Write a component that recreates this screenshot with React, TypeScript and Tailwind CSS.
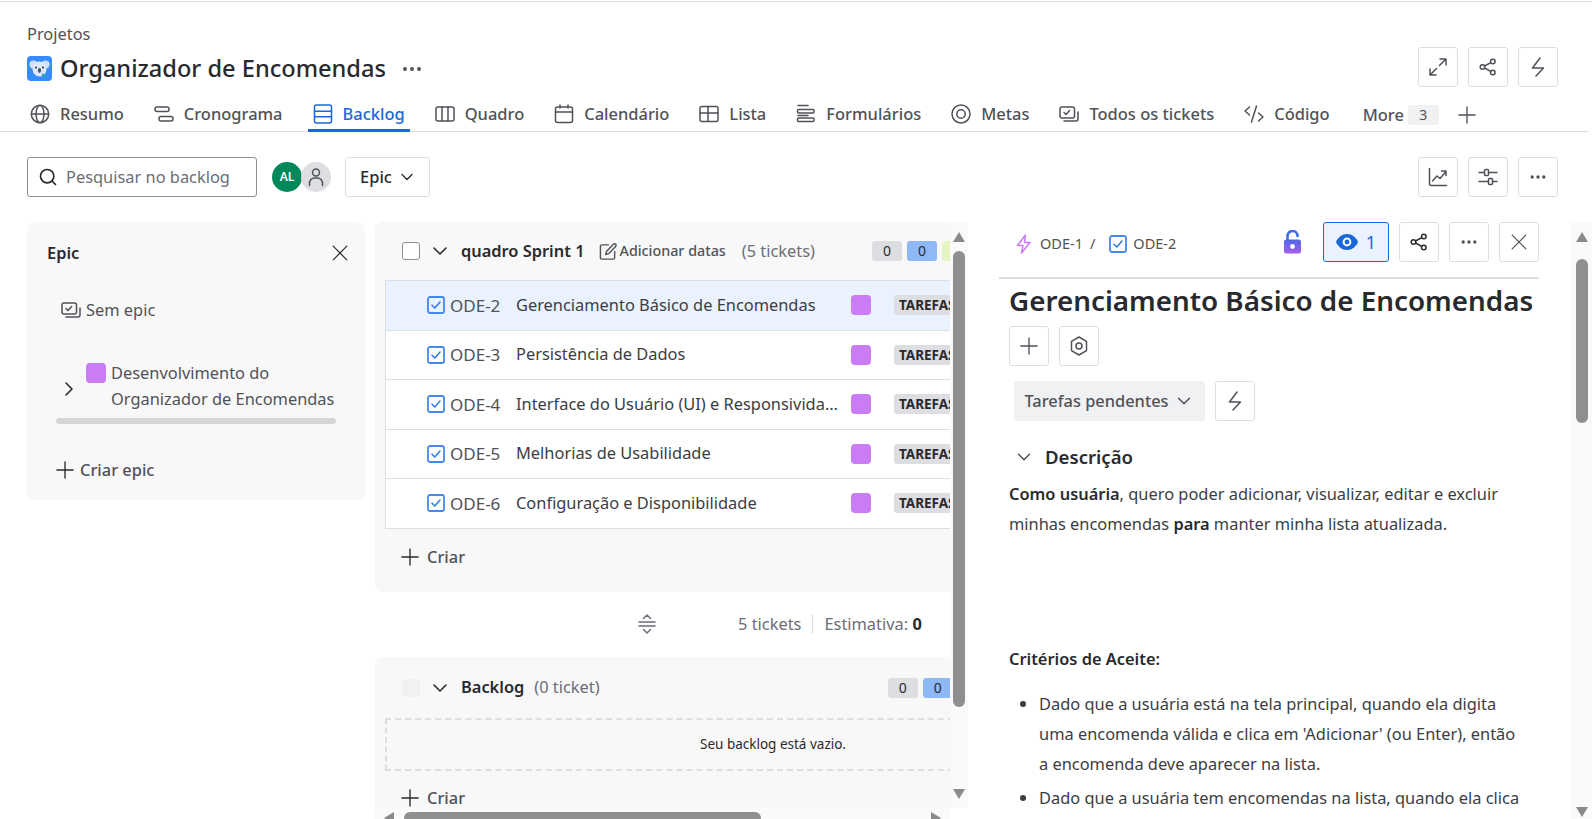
import type { ReactNode } from "react";
import { ChevronDown, ChevronRight, Ellipsis, Search } from "lucide-react";

// ===== SVG Icons =====
type IconProps = { className?: string };

const Svg = ({ className = "w-5 h-5", children }: IconProps & { children: ReactNode }) => (
  <svg
    className={`shrink-0 ${className}`}
    viewBox="0 0 20 20"
    fill="none"
    stroke="currentColor"
    strokeWidth="1.5"
    strokeLinecap="round"
    strokeLinejoin="round"
  >
    {children}
  </svg>
);

const IconPlus = (p: IconProps) => (
  <Svg {...p}>
    <path d="M10 1v18M1 10h18" />
  </Svg>
);
const IconClose = (p: IconProps) => (
  <Svg {...p}>
    <path d="M1.5 1.5l17 17M18.5 1.5l-17 17" />
  </Svg>
);
const IconBolt = (p: IconProps) => (
  <Svg {...p}>
    <path d="M12 1L4.5 11h11L8 19" />
  </Svg>
);
const IconEpic = (p: IconProps) => (
  <Svg {...p}>
    <path d="M11.5 1L3.5 11.5h5.5L7.5 19l8.5-10.5h-5.5z" />
  </Svg>
);
const IconExpand = (p: IconProps) => (
  <Svg {...p}>
    <path d="M12 2h6v6M18 2l-6.5 6.5M8 18H2v-6M2 18l6.5-6.5" />
  </Svg>
);
const IconGlobe = (p: IconProps) => (
  <Svg {...p}>
    <circle cx="10" cy="10" r="8.7" />
    <ellipse cx="10" cy="10" rx="4" ry="8.7" />
    <path d="M1.5 10h17" />
  </Svg>
);
const IconTimeline = (p: IconProps) => (
  <Svg {...p}>
    <rect x="1" y="3" width="14" height="4.6" rx="2" />
    <rect x="5" y="12.4" width="14" height="4.6" rx="2" />
  </Svg>
);
const IconBacklog = (p: IconProps) => (
  <Svg {...p}>
    <rect x="1.5" y="1" width="17" height="18" rx="2" />
    <path d="M1.5 7.2h17M1.5 12.8h17" />
  </Svg>
);
const IconBoard = (p: IconProps) => (
  <Svg {...p}>
    <rect x="1" y="3" width="18" height="14" rx="2" />
    <path d="M7 3v14M13 3v14" />
  </Svg>
);
const IconCalendar = (p: IconProps) => (
  <Svg {...p}>
    <rect x="1.5" y="3" width="17" height="15.5" rx="2" />
    <path d="M1.5 8h17M6 1v3M14 1v3" />
  </Svg>
);
const IconList = (p: IconProps) => (
  <Svg {...p}>
    <rect x="1" y="2.5" width="18" height="15" rx="2" />
    <path d="M1 9h18M9 2.5v15" />
  </Svg>
);
const IconForm = (p: IconProps) => (
  <Svg {...p}>
    <path d="M2 1.5h10" />
    <rect x="1.5" y="5.5" width="16.5" height="3.6" rx="1" />
    <rect x="1.5" y="14" width="16.5" height="3.6" rx="1" />
    <path d="M2 11.5h10" />
  </Svg>
);
const IconGoal = (p: IconProps) => (
  <Svg {...p}>
    <circle cx="10" cy="10" r="9" />
    <circle cx="10" cy="10" r="4.2" />
  </Svg>
);
const IconTickets = (p: IconProps) => (
  <Svg {...p}>
    <rect x="1" y="3" width="14.5" height="11" rx="2" />
    <path d="M5 8.5l2 2 3.6-4" />
    <path d="M19 8v7a2 2 0 0 1-2 2H5" />
  </Svg>
);
const IconCode = (p: IconProps) => (
  <Svg {...p}>
    <path d="M5.5 3L1 7l4.5 4M14.5 9L19 13l-4.5 4M12.5 2L7.5 18" />
  </Svg>
);
const IconShare = (p: IconProps) => (
  <Svg {...p}>
    <circle cx="4.5" cy="10" r="2.3" />
    <circle cx="14.8" cy="4.5" r="2.3" />
    <circle cx="14.8" cy="15.5" r="2.3" />
    <path d="M6.6 9l6.1-3.4M6.6 11l6.1 3.4" />
  </Svg>
);
const IconChart = (p: IconProps) => (
  <Svg {...p}>
    <path d="M1.5 1.5v15a2 2 0 0 0 2 2h15" />
    <path d="M4.5 14l4.5-5 3 2.5L18 4.5M13.5 4H18v4.5" />
  </Svg>
);
const IconSliders = (p: IconProps) => (
  <Svg {...p}>
    <path d="M1 5.5h5M11 5.5h8M1 14.5h9M15 14.5h4" />
    <rect x="6.5" y="2.5" width="4" height="6" rx="1" />
    <rect x="10.5" y="11.5" width="4" height="6" rx="1" />
  </Svg>
);
const IconEdit = (p: IconProps) => (
  <Svg {...p}>
    <path d="M10 3H3a1.5 1.5 0 0 0-1.5 1.5v12A1.5 1.5 0 0 0 3 18h12a1.5 1.5 0 0 0 1.5-1.5V10" />
    <path d="M7 13.2l.8-3.2 7.4-7.6a1.6 1.6 0 0 1 2.3 2.3l-7.4 7.6z" />
  </Svg>
);
const IconCollapse = (p: IconProps) => (
  <Svg {...p}>
    <path d="M6.5 4.5L10 1l3.5 3.5M6.5 15.5L10 19l3.5-3.5M2 8h16M2 12h16" />
  </Svg>
);
const IconHex = (p: IconProps) => (
  <Svg {...p}>
    <path d="M10 1l7.5 4.4v9.2L10 19l-7.5-4.4V5.4z" />
    <circle cx="10" cy="10" r="3" />
  </Svg>
);
const IconPerson = (p: IconProps) => (
  <Svg {...p}>
    <circle cx="10" cy="5.5" r="3.5" />
    <path d="M3.5 18.5v-2.5a5 5 0 0 1 5-5h3a5 5 0 0 1 5 5v2.5" />
  </Svg>
);
const IconLock = ({ className = "w-5 h-6" }: IconProps) => (
  <svg className={`shrink-0 ${className}`} viewBox="0 0 18 24">
    <defs>
      <linearGradient id="lockFill" x1="0" y1="0" x2="0" y2="1">
        <stop offset="0" stopColor="#4f68e6" />
        <stop offset="1" stopColor="#a35fe6" />
      </linearGradient>
    </defs>
    <path d="M4 10V6a5 5 0 0 1 10 0" fill="none" stroke="#3f6fe6" strokeWidth="2.6" strokeLinecap="round" />
    <rect x="0.5" y="9.5" width="17" height="14" rx="2.5" fill="url(#lockFill)" />
    <circle cx="9" cy="16.5" r="2.4" fill="#fff" />
  </svg>
);
const IconEye = ({ className = "w-[22px] h-[16px]" }: IconProps) => (
  <svg className={`shrink-0 ${className}`} viewBox="0 0 22 16">
    <path d="M11 0C6 0 2 3.3 0 8c2 4.7 6 8 11 8s9-3.3 11-8c-2-4.7-6-8-11-8z" fill="#1868db" />
    <circle cx="11" cy="8" r="4.4" fill="#fff" />
    <circle cx="11" cy="8" r="2.4" fill="#1868db" />
  </svg>
);
const IconCheckBox = ({ className = "w-[18px] h-[18px]" }: IconProps) => (
  <svg className={`shrink-0 ${className}`} viewBox="0 0 18 18" fill="none">
    <rect x="1" y="1" width="16" height="16" rx="2" stroke="#4688ec" strokeWidth="1.8" />
    <path d="M5 9.2l2.8 2.8L13 6" stroke="#357de8" strokeWidth="1.6" strokeLinecap="round" strokeLinejoin="round" />
  </svg>
);
const IconKoala = () => (
  <svg className="w-[25px] h-[25px] shrink-0" viewBox="0 0 25 25">
    <rect width="25" height="25" rx="4" fill="#388bff" />
    <circle cx="6.5" cy="8.5" r="4" fill="#cfe1fd" />
    <circle cx="18.5" cy="8.5" r="4" fill="#cfe1fd" />
    <ellipse cx="12.5" cy="13" rx="7" ry="7.5" fill="#dfe9f7" />
    <ellipse cx="12.5" cy="14.5" rx="1.6" ry="2.4" fill="#44546f" />
    <circle cx="9" cy="11.5" r="1" fill="#172b4d" />
    <circle cx="16" cy="11.5" r="1" fill="#172b4d" />
    <path d="M15 18l4 3" stroke="#1fa5a0" strokeWidth="2" />
  </svg>
);

// ===== Data =====
const tabs = [
  { label: "Resumo", icon: IconGlobe },
  { label: "Cronograma", icon: IconTimeline },
  { label: "Backlog", icon: IconBacklog, active: true },
  { label: "Quadro", icon: IconBoard },
  { label: "Calendário", icon: IconCalendar },
  { label: "Lista", icon: IconList },
  { label: "Formulários", icon: IconForm },
  { label: "Metas", icon: IconGoal },
  { label: "Todos os tickets", icon: IconTickets },
  { label: "Código", icon: IconCode },
];

const tickets = [
  { key: "ODE-2", title: "Gerenciamento Básico de Encomendas", selected: true },
  { key: "ODE-3", title: "Persistência de Dados" },
  { key: "ODE-4", title: "Interface do Usuário (UI) e Responsividade" },
  { key: "ODE-5", title: "Melhorias de Usabilidade" },
  { key: "ODE-6", title: "Configuração e Disponibilidade" },
];

// ===== Components =====
function IconButton({ children }: { children: ReactNode }) {
  return (
    <button className="w-10 h-10 flex items-center justify-center rounded-[3px] border border-[#dddee1] bg-white text-[#505258] shrink-0">
      {children}
    </button>
  );
}

function Swatch() {
  return <span className="block w-5 h-5 rounded-[4px] bg-[#c97cf4] shrink-0" />;
}

function CountBadges({ third = false }: { third?: boolean }) {
  return (
    <div className="flex gap-[5px] text-sm text-[#292a2e]">
      <span className="w-[30px] h-5 rounded-[3px] bg-[#dddee1] flex items-center justify-center">0</span>
      <span className="w-[30px] h-5 rounded-[3px] bg-[#8fb8f6] flex items-center justify-center">0</span>
      {third && <span className="w-[30px] h-5 rounded-[3px] bg-[#e4f5c0] flex items-center justify-center">0</span>}
    </div>
  );
}

function CreateRow() {
  return (
    <div className="flex items-center gap-2 text-[#505258] font-medium">
      <IconPlus className="w-[18px] h-[18px] text-[#292a2e]" />
      Criar
    </div>
  );
}

function TicketRow({ ticket }: { ticket: (typeof tickets)[number] }) {
  return (
    <div
      className={`h-[49.5px] flex items-center border-b border-[#dddee1] pl-[41px] ${
        ticket.selected ? "bg-[#e9f2fe]" : "bg-white"
      }`}
    >
      <IconCheckBox />
      <span className="ml-[5px] w-[66px] text-[17px] text-[#505258]">{ticket.key}</span>
      <span className="w-[322px] truncate text-[#3b3d42]">{ticket.title}</span>
      <span className="ml-[13px]">
        <Swatch />
      </span>
      <span className="ml-[23px] h-5 px-[5px] rounded-[3px] bg-[#dddee1] text-[13.5px] font-bold text-[#292a2e] flex items-center">
        TAREFAS PENDENTES
      </span>
    </div>
  );
}

function VerticalScrollbar({ thumb, bottom, className = "" }: { thumb: string; bottom: string; className?: string }) {
  return (
    <div className={`flex flex-col items-center shrink-0 bg-[#fafafa] ${className}`}>
      <span className="mt-[10px] w-0 h-0 border-x-[6px] border-x-transparent border-b-[10px] border-b-[#8a8a8a]" />
      <span className={`w-[12px] rounded-[6px] bg-[#8f8f8f] ${thumb}`} />
      <span className={`mt-auto w-0 h-0 border-x-[6px] border-x-transparent border-t-[10px] border-t-[#8a8a8a] ${bottom}`} />
    </div>
  );
}

function EpicPanel() {
  return (
    <aside className="w-[338px] h-[278px] rounded-lg bg-[#f8f8f8] shrink-0 px-5 pt-5 text-[#505258]">
      <div className="flex items-center justify-between h-[22px]">
        <span className="font-semibold text-[#292a2e]">Epic</span>
        <IconClose className="w-[16px] h-[16px] text-[#292a2e] mr-[-3px]" />
      </div>
      <div className="mt-[34px] ml-[14px] flex items-center gap-[5px] h-6">
        <IconTickets className="w-5 h-5" />
        Sem epic
      </div>
      <div className="mt-[38px] ml-[14px] flex items-center">
        <ChevronRight className="w-6 h-6 text-[#292a2e] shrink-0 -ml-[4.5px] mt-[6px]" strokeWidth={1.6} />
        <div className="ml-[5.5px] leading-[26px]">
          <div className="flex items-center gap-[5px]">
            <Swatch />
            Desenvolvimento do
          </div>
          <div className="ml-[25px] whitespace-nowrap">Organizador de Encomendas</div>
        </div>
      </div>
      <div className="mt-[6px] ml-[9px] w-[280px] h-[6px] rounded-[3px] bg-[#d6d6d6]" />
      <div className="mt-[34px] ml-[9px] flex items-center gap-[6px] font-medium">
        <IconPlus className="w-[18px] h-[18px] text-[#292a2e]" />
        Criar epic
      </div>
    </aside>
  );
}

function SprintColumn() {
  return (
    <div className="w-[575px] ml-[10px] flex flex-col shrink-0">
      <div className="flex-1 overflow-hidden">
        <div className="w-[800px]">
          <section className="h-[370px] rounded-lg bg-[#f8f8f8] pl-[10px]">
            <div className="h-[58px] flex items-center pl-[17px]">
              <span className="w-[18px] h-[18px] rounded-[3px] border border-[#8c8f97] bg-white" />
              <ChevronDown className="ml-[8px] w-6 h-6 text-[#292a2e]" strokeWidth={1.6} />
              <span className="ml-[9px] font-semibold text-[#292a2e]">quadro Sprint 1</span>
              <IconEdit className="ml-[14px] w-[19px] h-[19px] text-[#505258]" />
              <span className="ml-[2px] text-[14.3px] font-medium text-[#505258]">Adicionar datas</span>
              <span className="ml-[16px] text-[#6b6e76]">(5 tickets)</span>
              <span className="ml-[57px]">
                <CountBadges third />
              </span>
            </div>
            <div className="border-t border-l border-[#dddee1]">
              {tickets.map((t) => (
                <TicketRow key={t.key} ticket={t} />
              ))}
            </div>
            <div className="mt-4 pl-[16px]">
              <CreateRow />
            </div>
          </section>
          <div className="h-[64px] flex items-center text-[#6b6e76]">
            <IconCollapse className="ml-[262px] w-5 h-5 text-[#6b6e76]" />
            <span className="ml-[81px]">5 tickets</span>
            <span className="mx-[11px] w-px h-5 bg-[#dddee1]" />
            <span>
              Estimativa: <b className="text-[#292a2e]">0</b>
            </span>
          </div>
          <section className="mt-px h-[200px] rounded-lg bg-[#f8f8f8] pl-[10px]">
            <div className="h-[61px] flex items-center pl-[17px]">
              <span className="w-[18px] h-[18px] rounded-[3px] bg-[#f0f1f2]" />
              <ChevronDown className="ml-[8px] w-6 h-6 text-[#292a2e]" strokeWidth={1.6} />
              <span className="ml-[9px] font-semibold text-[#292a2e]">Backlog</span>
              <span className="ml-[10px] text-[#6b6e76]">(0 ticket)</span>
              <span className="ml-[288px]">
                <CountBadges />
              </span>
            </div>
            <div className="h-[53px] border-2 border-dashed border-[#dddee1] flex items-center pl-[313px] text-[13.5px] text-[#292a2e]">
              Seu backlog está vazio.
            </div>
            <div className="mt-[15px] pl-[16px]">
              <CreateRow />
            </div>
          </section>
        </div>
      </div>
      <div className="h-[11px] bg-[#fafafa] flex items-start pt-[4px] shrink-0 overflow-hidden">
        <span className="ml-[9px] w-0 h-0 border-y-[6px] border-y-transparent border-r-[10px] border-r-[#8a8a8a]" />
        <span className="ml-[10px] w-[357px] h-[12px] rounded-[6px] bg-[#8f8f8f]" />
        <span className="ml-auto mr-[9px] w-0 h-0 border-y-[6px] border-y-transparent border-l-[10px] border-l-[#8a8a8a]" />
      </div>
    </div>
  );
}

function DetailPanel() {
  return (
    <div className="w-[540px] ml-[31px] shrink-0 text-[#292a2e] overflow-hidden">
      <div className="h-[57px] border-b-2 border-[#dddee1] flex items-start">
        <div className="h-[44px] flex items-center pl-[15px] text-[14.5px] text-[#505258]">
          <IconEpic className="w-5 h-[22px] text-[#c97cf4]" />
          <span className="ml-[6px]">ODE-1</span>
          <span className="ml-[7px]">/</span>
          <span className="ml-[14px]">
            <IconCheckBox />
          </span>
          <span className="ml-[6px]">ODE-2</span>
        </div>
        <div className="ml-auto flex items-center gap-[10px]">
          <IconLock className="w-[19px] h-[24px] mr-[11px]" />
          <button className="w-[66px] h-10 rounded-[3px] border border-[#1868db] bg-[#e9f2fe] flex items-center justify-center gap-2 text-[18px] text-[#1868db]">
            <IconEye />1
          </button>
          <IconButton>
            <IconShare className="w-5 h-5 text-[#292a2e]" />
          </IconButton>
          <IconButton>
            <Ellipsis className="w-5 h-5" />
          </IconButton>
          <IconButton>
            <IconClose className="w-[16px] h-[16px]" />
          </IconButton>
        </div>
      </div>
      <div className="pl-[10px]">
        <h1 className="text-[27.8px] leading-[43px] font-semibold whitespace-nowrap">
          Gerenciamento Básico de Encomendas
        </h1>
        <div className="flex gap-[10px] mt-[4px]">
          <IconButton>
            <IconPlus className="w-[18px] h-[18px]" />
          </IconButton>
          <IconButton>
            <IconHex className="w-5 h-5" />
          </IconButton>
        </div>
        <div className="flex gap-[10px] mt-[15px] ml-[5px]">
          <div className="w-[191px] h-10 rounded-[3px] bg-[#f0f1f2] flex items-center justify-center gap-[4px] font-medium text-[#505258]">
            Tarefas pendentes
            <ChevronDown className="w-[22px] h-[22px]" strokeWidth={1.6} />
          </div>
          <IconButton>
            <IconBolt className="w-5 h-5" />
          </IconButton>
        </div>
        <div className="flex items-center mt-[22px] ml-[4px] h-7">
          <ChevronDown className="w-[22px] h-[22px] text-[#505258]" strokeWidth={1.6} />
          <h2 className="ml-[10px] text-[18.6px] font-semibold">Descrição</h2>
        </div>
        <div className="mt-[8px] leading-[30px] text-[#3b3d42]">
          <p>
            <strong className="font-semibold text-[#292a2e]">Como usuária</strong>, quero poder adicionar, visualizar, editar e excluir
            <br />
            minhas encomendas <strong className="font-semibold text-[#292a2e]">para</strong> manter minha lista atualizada.
          </p>
          <p className="mt-[105px] font-semibold text-[#292a2e]">Critérios de Aceite:</p>
          <ul className="mt-[15px] list-disc pl-[30px] pr-[18px]">
            <li>Dado que a usuária está na tela principal, quando ela digita uma encomenda válida e clica em 'Adicionar' (ou Enter), então a encomenda deve aparecer na lista.</li>
            <li className="mt-[4px]">Dado que a usuária tem encomendas na lista, quando ela clica</li>
          </ul>
        </div>
      </div>
    </div>
  );
}

export default function App() {
  return (
    <div className="w-[1592px] h-[819px] overflow-hidden bg-white flex flex-col font-['Noto_Sans','Open_Sans',sans-serif] text-[16.4px] text-[#292a2e]">
      <div className="h-[2px] shrink-0 pt-px">
        <div className="h-px bg-[#dddee1]" />
      </div>

      {/* Header */}
      <header className="pl-[27px] pr-[34px] shrink-0">
        <div className="mt-[20px] h-6 leading-6 text-[#505258]">Projetos</div>
        <div className="mt-px flex items-start justify-between h-10">
          <div className="flex items-center gap-2 mt-[7px] h-[29px]">
            <IconKoala />
            <span className="text-[23.6px] font-medium text-[#292a2e]">Organizador de Encomendas</span>
            <Ellipsis className="ml-[6px] w-6 h-6 text-[#505258]" />
          </div>
          <div className="flex gap-[10px]">
            <IconButton>
              <IconExpand className="w-5 h-5" />
            </IconButton>
            <IconButton>
              <IconShare className="w-5 h-5" />
            </IconButton>
            <IconButton>
              <IconBolt className="w-5 h-5" />
            </IconButton>
          </div>
        </div>
      </header>

      {/* Tabs */}
      <nav className="h-[45px] pt-[12px] mr-[4px] pl-[25px] border-b border-[#dddee1] flex items-stretch gap-[20px] shrink-0 text-[16.47px] text-[#505258]">
        {tabs.map((tab) => (
          <div
            key={tab.label}
            className={`flex items-center gap-[10px] px-[5px] border-b-[3px] -mb-px font-medium ${
              tab.active ? "border-[#1868db] text-[#1868db]" : "border-transparent"
            }`}
          >
            <tab.icon className="w-5 h-5" />
            {tab.label}
          </div>
        ))}
        <div className="flex items-center font-medium ml-[8px]">
          More
          <span className="ml-[4px] w-[31px] h-5 rounded-[3px] bg-[#f0f1f2] text-sm font-normal flex items-center justify-center">3</span>
          <IconPlus className="ml-[19px] w-[18px] h-[18px]" />
        </div>
      </nav>

      {/* Toolbar */}
      <div className="h-[40px] mt-[25px] pl-[27px] pr-[34px] flex items-center shrink-0">
        <div className="w-[230px] h-10 rounded-[3px] border border-[#8c8f97] flex items-center pl-[10px] gap-[8px] text-[#6b6e76]">
          <Search className="w-5 h-5 text-[#292a2e]" strokeWidth={2} />
          Pesquisar no backlog
        </div>
        <div className="ml-[15px] w-[30px] h-[30px] rounded-full bg-[#00875a] text-white text-xs font-semibold flex items-center justify-center">AL</div>
        <div className="-ml-[1px] w-[30px] h-[30px] rounded-full bg-[#dddee1] flex items-center justify-center text-[#505258]">
          <IconPerson className="w-5 h-5" />
        </div>
        <div className="ml-[14px] w-[85px] h-10 pl-[2px] rounded-[3px] border border-[#dddee1] flex items-center justify-center gap-[5px] font-medium">
          Epic
          <ChevronDown className="w-[20px] h-[20px]" strokeWidth={1.6} />
        </div>
        <div className="ml-auto flex gap-[10px]">
          <IconButton>
            <IconChart className="w-5 h-5" />
          </IconButton>
          <IconButton>
            <IconSliders className="w-5 h-5" />
          </IconButton>
          <IconButton>
            <Ellipsis className="w-5 h-5" />
          </IconButton>
        </div>
      </div>

      {/* Body */}
      <main className="flex-1 min-h-0 mt-[25px] pl-[27px] flex">
        <EpicPanel />
        <SprintColumn />
        <VerticalScrollbar thumb="mt-[9px] h-[456px]" bottom="mb-[9px]" className="w-[18px] h-[586px]" />
        <DetailPanel />
        <VerticalScrollbar thumb="mt-[17px] h-[164px]" bottom="mb-[2px]" className="ml-[32px] w-[21px]" />
      </main>
    </div>
  );
}
